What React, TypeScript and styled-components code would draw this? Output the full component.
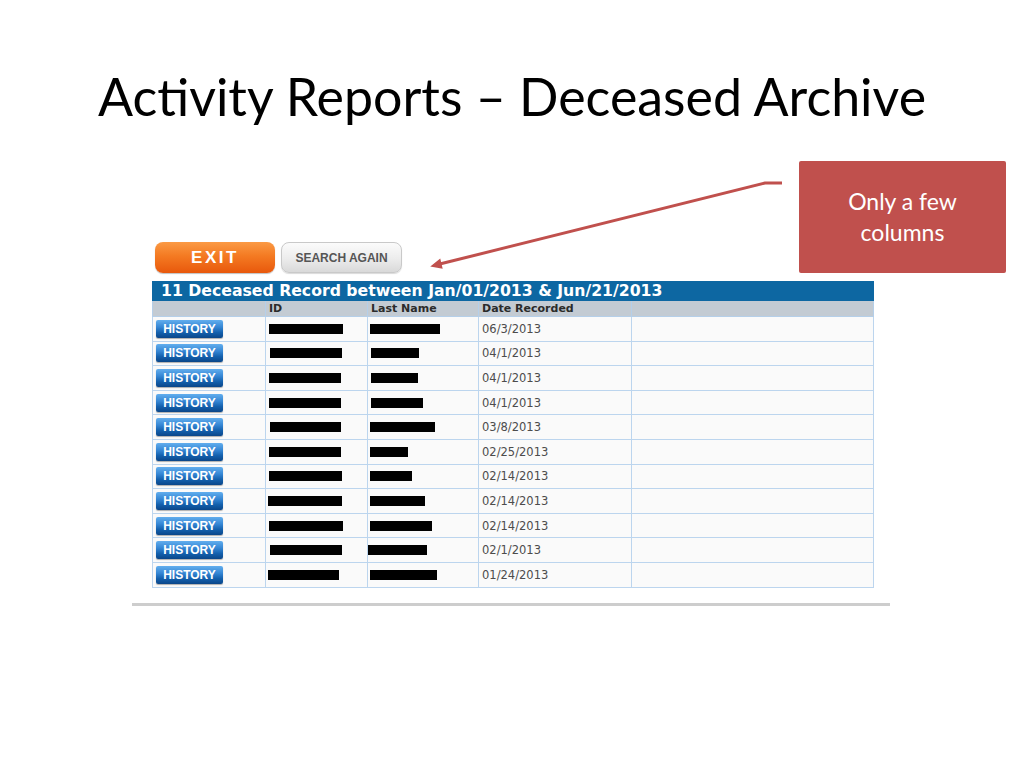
import React from "react";
import styled, { createGlobalStyle } from "styled-components";

const Global = createGlobalStyle`
  html, body { margin: 0; padding: 0; background: #ffffff; }
  body { font-family: "Liberation Sans", Arial, sans-serif; }
`;

const Slide = styled.div`
  position: relative;
  width: 1024px;
  height: 768px;
  background: #ffffff;
  overflow: hidden;
  display: flex;
  flex-direction: column;
`;

const Title = styled.h1`
  margin: 0;
  padding-top: 66px;
  height: 60px;
  line-height: 60px;
  text-align: center;
  font-family: Lato, "Open Sans", sans-serif;
  font-weight: 400;
  font-size: 51.9px;
  color: #000000;
`;

const Content = styled.div`
  margin-top: 116px;
  margin-left: 152px;
  width: 721px;
  display: flex;
  flex-direction: column;
`;

const ButtonBar = styled.div`
  display: flex;
  gap: 6px;
  padding-left: 3px;
  margin-bottom: 8px;
`;

const ExitButton = styled.button`
  width: 120px;
  height: 31px;
  border: none;
  border-radius: 8px;
  background: linear-gradient(#fb9a45 0%, #f47a22 45%, #e8580c 100%);
  box-shadow: 0 1px 1px rgba(0, 0, 0, 0.25);
  color: #ffffff;
  font-family: "Liberation Sans", Arial, sans-serif;
  font-weight: 700;
  font-size: 17px;
  letter-spacing: 2.5px;
  padding: 0;
`;

const SearchButton = styled.button`
  width: 121px;
  height: 31px;
  border: 1px solid #c9c9c9;
  border-radius: 8px;
  background: linear-gradient(#fbfbfb 0%, #ececec 55%, #d9d9d9 100%);
  box-shadow: 0 1px 1px rgba(0, 0, 0, 0.15);
  color: #555555;
  font-family: "Liberation Sans", Arial, sans-serif;
  font-weight: 700;
  font-size: 12px;
  padding: 0;
`;

const Table = styled.table`
  width: 721px;
  border-collapse: collapse;
  table-layout: fixed;
  font-family: "DejaVu Sans", Verdana, sans-serif;
`;

const Caption = styled.th`
  height: 18px;
  padding: 0 0 0 8px;
  background: #0d67a2;
  color: #ffffff;
  font-size: 15.7px;
  font-weight: 700;
  text-align: left;
  line-height: 18px;
  white-space: nowrap;
  border: 1px solid #0d67a2;
`;

const HeadCell = styled.th`
  height: 15px;
  padding: 0 0 0 3px;
  background: #c3cbd3;
  color: #2b2b2b;
  font-size: 11px;
  font-weight: 700;
  text-align: left;
  line-height: 15px;
  border: 1px solid #b5cfe9;
  border-top: none;
`;

const Row = styled.tr`
  height: 24.6px;
  background: #fafafa;
`;

const Cell = styled.td`
  padding: 0 0 0 3px;
  border: 1px solid #bcd5ee;
  color: #4c4c4c;
  font-size: 11.5px;
  vertical-align: middle;
  white-space: nowrap;
`;

const HistoryButton = styled.button`
  display: block;
  width: 67px;
  height: 18px;
  border: none;
  border-radius: 2px;
  background: linear-gradient(#62aeee 0%, #3586d4 40%, #1360ad 70%, #0a4689 100%);
  box-shadow: 0 1px 1px rgba(0, 0, 0, 0.3);
  color: #ffffff;
  font-family: "Liberation Sans", Arial, sans-serif;
  font-weight: 700;
  font-size: 12px;
  padding: 0;
  text-align: center;
`;

const Redacted = styled.div`
  height: 10px;
  background: #000000;
`;

const Rule = styled.div`
  margin-top: 15px;
  margin-left: -20px;
  width: 758px;
  height: 3px;
  background: #cdcdcd;
`;

const Callout = styled.div`
  position: absolute;
  left: 799px;
  top: 161px;
  width: 207px;
  height: 112px;
  border-radius: 2px;
  background: #c0504d;
  color: #ffffff;
  font-family: Lato, "Open Sans", sans-serif;
  font-size: 23px;
  line-height: 31px;
  text-align: center;
  display: flex;
  align-items: center;
  justify-content: center;
  box-sizing: border-box;
`;

const Arrow = styled.svg`
  position: absolute;
  left: 425px;
  top: 175px;
  width: 365px;
  height: 100px;
  pointer-events: none;
`;

const rows = [
  { id: [74, 3], ln: [70, 2], date: "06/3/2013" },
  { id: [72, 4], ln: [48, 3], date: "04/1/2013" },
  { id: [72, 3], ln: [47, 3], date: "04/1/2013" },
  { id: [72, 3], ln: [52, 3], date: "04/1/2013" },
  { id: [71, 4], ln: [65, 2], date: "03/8/2013" },
  { id: [72, 3], ln: [38, 2], date: "02/25/2013" },
  { id: [73, 3], ln: [42, 2], date: "02/14/2013" },
  { id: [74, 2], ln: [55, 2], date: "02/14/2013" },
  { id: [74, 3], ln: [62, 2], date: "02/14/2013" },
  { id: [72, 4], ln: [59, 0], date: "02/1/2013" },
  { id: [71, 2], ln: [67, 2], date: "01/24/2013" },
];

export default function App() {
  return (
    <Slide>
      <Global />
      <Title>Activity Reports – Deceased Archive</Title>
      <Content>
        <ButtonBar>
          <ExitButton>EXIT</ExitButton>
          <SearchButton>SEARCH AGAIN</SearchButton>
        </ButtonBar>
        <Table>
          <colgroup>
            <col style={{ width: 113 }} />
            <col style={{ width: 102 }} />
            <col style={{ width: 111 }} />
            <col style={{ width: 153 }} />
            <col style={{ width: 242 }} />
          </colgroup>
          <thead>
            <tr>
              <Caption colSpan={5}>11 Deceased Record between Jan/01/2013 &amp; Jun/21/2013</Caption>
            </tr>
            <tr>
              <HeadCell />
              <HeadCell>ID</HeadCell>
              <HeadCell>Last Name</HeadCell>
              <HeadCell>Date Recorded</HeadCell>
              <HeadCell />
            </tr>
          </thead>
          <tbody>
            {rows.map((r, i) => (
              <Row key={i}>
                <Cell>
                  <HistoryButton>HISTORY</HistoryButton>
                </Cell>
                <Cell>
                  <Redacted style={{ width: r.id[0], marginLeft: r.id[1] - 3 }} />
                </Cell>
                <Cell>
                  <Redacted style={{ width: r.ln[0], marginLeft: r.ln[1] - 3 }} />
                </Cell>
                <Cell>{r.date}</Cell>
                <Cell />
              </Row>
            ))}
          </tbody>
        </Table>
        <Rule />
      </Content>
      <Callout>
        Only a few
        <br />
        columns
      </Callout>
      <Arrow viewBox="425 175 365 100">
        <polyline
          points="782,183 765,183 440.7,263.8"
          fill="none"
          stroke="#c0504d"
          strokeWidth="3"
          strokeLinejoin="round"
        />
        <polygon points="432,266 439.8,259.9 441.7,267.7" fill="#c0504d" stroke="#c0504d" strokeWidth="1.5" />
      </Arrow>
    </Slide>
  );
}
